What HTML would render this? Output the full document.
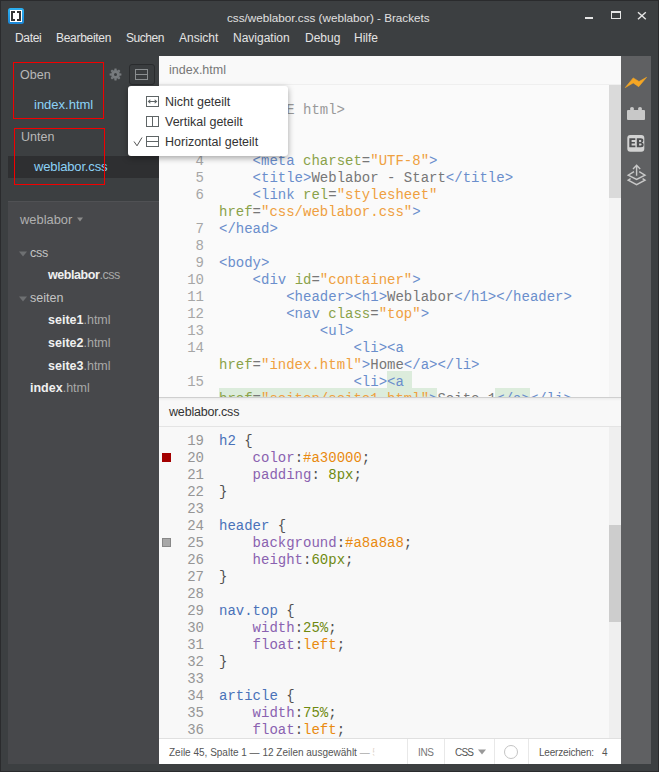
<!DOCTYPE html>
<html><head><meta charset="utf-8">
<style>
*{margin:0;padding:0;box-sizing:border-box}
html,body{width:659px;height:772px;overflow:hidden}
body{background:#3c3f41;position:relative;font-family:"Liberation Sans",sans-serif}
.a{position:absolute;white-space:pre}
.t{position:absolute;white-space:pre;line-height:1}
#bl{left:0;top:0;width:1px;height:772px;background:#2a2b2d}
#bt{left:0;top:0;width:659px;height:1px;background:#2a2b2d}
#bb{left:0;top:771px;width:659px;height:1px;background:#2a2b2d}
#br{left:658px;top:0;width:1px;height:772px;background:#2a2b2d}
.menu{font-size:12px;color:#e4e4e4;top:32px}
#proj{left:8px;top:201px;width:151px;height:563px;background:#47484b;border-top:1px solid #505154}
#sel{left:8px;top:156px;width:151px;height:22px;background:#2e2f31}
.rb{position:absolute;border:1px solid #f20000}
#editor{left:159px;top:56px;width:462px;height:708px;background:#fafafa}
#toolbar{left:621px;top:56px;width:30px;height:708px;background:#5f6062}
.hdr{position:absolute;left:0;width:462px;height:29px;background:#f9f9f9;border-bottom:1px solid #efefef}
.code{font-family:"Liberation Mono",monospace;font-size:14px;color:#777}
.ln{color:#a6a6a6;}
.tg{color:#6a8ecc}.at{color:#8aa24a}.st{color:#efa040}.pr{color:#9070b4}.nm{color:#7f9838}.mt{color:#999}.lo .tg{color:#4a72b8}.lo .pr{color:#8a62b0}.lo .st{color:#e98a10}.lo .nm{color:#6f8a10}.lo.code{color:#505050}.lo.ln{color:#959595}.hl{}
#status{left:159px;top:738px;width:462px;height:26px;background:#fff;border-top:1px solid #e0e0e0}
.sep{position:absolute;top:739px;width:1px;height:25px;background:#e8e8e8}
.st11{font-size:10px;color:#555;margin-top:1px}
#dd{left:128px;top:86px;width:160px;height:70px;background:#fff;border-radius:3px;box-shadow:0 2px 6px rgba(0,0,0,.35)}
.ddi{font-size:12.5px;color:#333;margin-top:1px}
</style></head><body>
<div class="a" id="bl"></div><div class="a" id="bt"></div><div class="a" id="br"></div><div class="a" id="bb"></div>

<!-- title bar -->
<svg class="a" style="left:8px;top:8px" width="16" height="16" viewBox="0 0 16 16">
<defs><linearGradient id="bg1" x1="0" y1="0" x2="0" y2="1"><stop offset="0" stop-color="#2cb0f0"/><stop offset="1" stop-color="#1b86d6"/></linearGradient></defs>
<rect x="0" y="0" width="16" height="16" rx="2.5" fill="url(#bg1)"/>
<rect x="2" y="2" width="12" height="12" fill="#fff"/>
<path d="M3 3h4v2H5v6h2v2H3z M13 3H9v2h2v6H9v2h4z" fill="#333"/>
</svg>
<div class="t" style="left:227px;top:12px;font-size:11.7px;color:#e0e0e0">css/weblabor.css (weblabor) - Brackets</div>
<div class="a" style="left:585px;top:17px;width:8px;height:2px;background:#e6e6e6"></div>
<div class="a" style="left:611px;top:11px;width:10px;height:8px;border:1px solid #e6e6e6;border-top-width:2px"></div>
<svg class="a" style="left:637px;top:11px" width="10" height="9" viewBox="0 0 10 9"><path d="M1 1.2L8.8 8.3M8.8 1.2L1 8.3" stroke="#e6e6e6" stroke-width="1.4"/></svg>

<div class="t menu" style="left:15px;letter-spacing:-0.32px">Datei</div>
<div class="t menu" style="left:56px;letter-spacing:-0.3px">Bearbeiten</div>
<div class="t menu" style="left:126px;letter-spacing:-0.46px">Suchen</div>
<div class="t menu" style="left:179px">Ansicht</div>
<div class="t menu" style="left:233px">Navigation</div>
<div class="t menu" style="left:305px">Debug</div>
<div class="t menu" style="left:354px">Hilfe</div>

<!-- working set -->
<div class="a" id="sel"></div>
<div class="t" style="left:20px;top:69px;font-size:12.5px;color:#b8b8b8">Oben</div>
<div class="t" style="left:34px;top:98px;font-size:13px;color:#8cd2f7">index.html</div>
<div class="t" style="left:21px;top:131px;font-size:12.5px;color:#b8b8b8">Unten</div>
<div class="t" style="left:34px;top:160px;font-size:13px;color:#8cd2f7;letter-spacing:-0.15px">weblabor.css</div>
<div class="rb" style="left:13px;top:62px;width:91px;height:57px"></div>
<div class="rb" style="left:14px;top:128px;width:91px;height:57px"></div>

<svg class="a" style="left:109px;top:68px" width="13" height="13" viewBox="-6.5 -6.5 13 13">
<g fill="#777b7e"><circle r="4.4"/><path transform="rotate(0)" d="M-1.3 -4 L-1 -5.9 H1 L1.3 -4Z"/><path transform="rotate(45)" d="M-1.3 -4 L-1 -5.9 H1 L1.3 -4Z"/><path transform="rotate(90)" d="M-1.3 -4 L-1 -5.9 H1 L1.3 -4Z"/><path transform="rotate(135)" d="M-1.3 -4 L-1 -5.9 H1 L1.3 -4Z"/><path transform="rotate(180)" d="M-1.3 -4 L-1 -5.9 H1 L1.3 -4Z"/><path transform="rotate(225)" d="M-1.3 -4 L-1 -5.9 H1 L1.3 -4Z"/><path transform="rotate(270)" d="M-1.3 -4 L-1 -5.9 H1 L1.3 -4Z"/><path transform="rotate(315)" d="M-1.3 -4 L-1 -5.9 H1 L1.3 -4Z"/></g><circle r="1.5" fill="#3c3f41"/></svg>
<div class="a" style="left:129px;top:64px;width:26px;height:21px;border:1px solid #2a2c2e;border-radius:3px;background:#3a3d3f"></div>
<div class="a" style="left:135px;top:69px;width:13px;height:11px;border:1px solid #8a8e90"></div>
<div class="a" style="left:135px;top:74px;width:13px;height:1px;background:#8a8e90"></div>
<!-- project tree -->
<div class="a" id="proj"></div>
<div class="t" style="left:20px;top:214px;font-size:12.9px;color:#b0b0b0">weblabor</div>
<svg class="a" style="left:77px;top:217px" width="6" height="5" viewBox="0 0 6 5"><path d="M0 0.5h6L3 4.5z" fill="#8c8c8c"/></svg>
<svg class="a" style="left:19px;top:251px" width="8" height="6" viewBox="0 0 8 6"><path d="M0 0.5h8L4 5.5z" fill="#6e7072"/></svg>
<div class="t" style="left:30px;top:247px;font-size:12.5px;color:#c4c4c4;letter-spacing:-0.2px">css</div>
<div class="t" style="left:48px;top:269px;font-size:12.5px;color:#f0f0f0;letter-spacing:-0.43px"><b>weblabor</b><span style="color:#a8a8a8">.css</span></div>
<svg class="a" style="left:19px;top:296px" width="8" height="6" viewBox="0 0 8 6"><path d="M0 0.5h8L4 5.5z" fill="#6e7072"/></svg>
<div class="t" style="left:30px;top:292px;font-size:12.5px;color:#c4c4c4">seiten</div>
<div class="t" style="left:48px;top:314px;font-size:12.5px;color:#f0f0f0"><b>seite1</b><span style="color:#a8a8a8">.html</span></div>
<div class="t" style="left:48px;top:337px;font-size:12.5px;color:#f0f0f0"><b>seite2</b><span style="color:#a8a8a8">.html</span></div>
<div class="t" style="left:48px;top:360px;font-size:12.5px;color:#f0f0f0"><b>seite3</b><span style="color:#a8a8a8">.html</span></div>
<div class="t" style="left:30px;top:382px;font-size:12.5px;color:#f0f0f0"><b>index</b><span style="color:#a8a8a8">.html</span></div>

<!-- editor -->
<div class="a" id="editor">
<div class="a" style="left:0;top:29px;width:462px;height:312px;overflow:hidden">
<div class="a" style="left:0;top:-29px;width:462px;height:400px">
<div class="a" style="left:228px;top:315px;width:25px;height:17px;background:#dcecdc"></div><div class="a" style="left:60px;top:332px;width:218px;height:17px;background:#dcecdc"></div><div class="a" style="left:336px;top:332px;width:35px;height:17px;background:#dcecdc"></div>
<div class="a code ln" style="left:0;top:46px;width:45px;text-align:right;line-height:17px">1
2
3
4
5
6

7
8
9
10
11
12
13
14

15
</div>
<div class="a code" style="left:60px;top:46px;line-height:17px"><span class="mt">&lt;!DOCTYPE html&gt;</span>
<span class="tg">&lt;html&gt;</span>
<span class="tg">&lt;head&gt;</span>
    <span class="tg">&lt;meta</span> <span class="at">charset</span>=<span class="st">"UTF-8"</span><span class="tg">&gt;</span>
    <span class="tg">&lt;title&gt;</span>Weblabor - Start<span class="tg">&lt;/title&gt;</span>
    <span class="tg">&lt;link</span> <span class="at">rel</span>=<span class="st">"stylesheet"</span>
<span class="at">href</span>=<span class="st">"css/weblabor.css"</span><span class="tg">&gt;</span>
<span class="tg">&lt;/head&gt;</span>

<span class="tg">&lt;body&gt;</span>
    <span class="tg">&lt;div</span> <span class="at">id</span>=<span class="st">"container"</span><span class="tg">&gt;</span>
        <span class="tg">&lt;header&gt;</span><span class="tg">&lt;h1&gt;</span>Weblabor<span class="tg">&lt;/h1&gt;</span><span class="tg">&lt;/header&gt;</span>
        <span class="tg">&lt;nav</span> <span class="at">class</span>=<span class="st">"top"</span><span class="tg">&gt;</span>
            <span class="tg">&lt;ul&gt;</span>
                <span class="tg">&lt;li&gt;</span><span class="tg">&lt;a</span>
<span class="at">href</span>=<span class="st">"index.html"</span><span class="tg">&gt;</span>Home<span class="tg">&lt;/a&gt;</span><span class="tg">&lt;/li&gt;</span>
                <span class="tg">&lt;li&gt;</span><span class="hl"><span class="tg">&lt;a</span> </span>
<span class="hl"><span class="at">href</span>=<span class="st">"seiten/seite1.html"</span><span class="tg">&gt;</span></span>Seite 1<span class="hl"><span class="tg">&lt;/a&gt;</span></span><span class="tg">&lt;/li&gt;</span></div>
</div></div>
<div class="a" style="left:450px;top:29px;width:12px;height:312px;background:#f4f4f4"></div>
<div class="a" style="left:450px;top:29px;width:12px;height:113px;background:#dadada"></div>
<div class="hdr" style="top:0"></div>
<div class="t" style="left:10px;top:8px;font-size:12.5px;color:#777">index.html</div>
<div class="a" style="left:0;top:341px;width:462px;height:1px;background:#cfcfcf"></div>
<div class="a" style="left:0;top:371px;width:462px;height:311px;overflow:hidden;background:#f8f8f8">
<div class="a" style="left:0;top:-371px;width:462px;height:700px">
<div class="a code ln lo" style="left:0;top:377px;width:45px;text-align:right;line-height:17px">19
20
21
22
23
24
25
26
27
28
29
30
31
32
33
34
35
36</div>
<div class="a code lo" style="left:60px;top:377px;line-height:17px"><span class="tg">h2</span> {
    <span class="pr">color</span>:<span class="st">#a30000</span>;
    <span class="pr">padding</span>: <span class="nm">8px</span>;
}

<span class="tg">header</span> {
    <span class="pr">background</span>:<span class="st">#a8a8a8</span>;
    <span class="pr">height</span>:<span class="nm">60px</span>;
}

<span class="tg">nav.top</span> {
    <span class="pr">width</span>:<span class="nm">25%</span>;
    <span class="pr">float</span>:<span class="st">left</span>;
}

<span class="tg">article</span> {
    <span class="pr">width</span>:<span class="nm">75%</span>;
    <span class="pr">float</span>:<span class="st">left</span>;</div>
</div></div>
<div class="a" style="left:450px;top:371px;width:12px;height:311px;background:#efefef"></div>
<div class="a" style="left:450px;top:469px;width:12px;height:97px;background:#cdcdcd"></div>
<div class="hdr" style="top:342px;border-bottom-color:#e4e4e4;background:linear-gradient(#ececec,#f8f8f8 3px)"></div>
<div class="t" style="left:10px;top:350px;font-size:12.5px;color:#333;letter-spacing:-0.17px">weblabor.css</div>
<div class="a" style="left:3px;top:397px;width:9px;height:9px;background:#a30000"></div>
<div class="a" style="left:3px;top:482px;width:9px;height:9px;background:#a8a8a8;border:1px solid #888"></div>
</div>
<div class="a" id="toolbar"></div>
<svg class="a" style="left:621px;top:56px" width="30" height="140" viewBox="621 56 30 140">
<path d="M625.3 87.6 L633.2 77.9 L639 81.5 L646.6 77.3 L638.7 86.7 L633.2 82.9 Z" fill="#f5a623" stroke="#f5a623" stroke-width="0.6" stroke-linejoin="round"/>
<rect x="627" y="110" width="18" height="10" rx="1" fill="#c8c8c8"/>
<rect x="630" y="107" width="4" height="4" rx="2" fill="#c8c8c8"/>
<rect x="638" y="107" width="4" height="4" rx="2" fill="#c8c8c8"/>
<rect x="627.3" y="135" width="17" height="16.7" rx="3" fill="#d2d2d2"/>
<path fill="#4e4f51" fill-rule="evenodd" d="M629.3 138.3h6v1.8h-3.7v1.8h3.3v1.7h-3.3v1.9h3.8v1.8h-6.1z M636.8 138.3h3.9q2.6 0 2.6 2.3q0 1.5-1.3 2q1.7 0.4 1.7 2.2q0 2.5-2.8 2.5h-4.1z M639.1 140v1.9h1.3q0.9 0 0.9-1q0-0.9-0.9-0.9z M639.1 143.5v2.1h1.5q1 0 1-1.05q0-1.05-1-1.05z"/>
<g fill="none" stroke="#c8c8c8" stroke-width="1.4">
<path d="M636.6 165.5 V175.7 M633 169 L636.6 165.3 L640.2 169"/>
<path d="M634 171.6 L628.2 175.2 L636.6 179.4 L645 175.2 L639.2 171.6"/>
<path d="M630.6 178.6 L628.2 180.1 L636.6 184.6 L645 180.1 L642.6 178.6"/>
</g>
</svg>

<div class="a" id="status"></div>
<div class="t st11" style="left:169px;top:747px">Zeile 45, Spalte 1 — 12 Zeilen ausgewählt <span style="color:#aaa">— 5</span></div>
<div class="a" style="left:372px;top:740px;width:35px;height:23px;background:linear-gradient(90deg,rgba(255,255,255,0),#fff 3px)"></div>
<div class="sep" style="left:407px"></div>
<div class="t st11" style="left:418px;top:747px;color:#777;letter-spacing:-0.4px">INS</div>
<div class="sep" style="left:444px"></div>
<div class="t st11" style="left:455px;top:747px;letter-spacing:-0.8px">CSS</div>
<svg class="a" style="left:478px;top:749px" width="8" height="6" viewBox="0 0 8 6"><path d="M0 0.5h8L4 5.5z" fill="#999"/></svg>
<div class="sep" style="left:494px"></div>
<div class="a" style="left:504px;top:745px;width:14px;height:14px;border:1px solid #c4c4c4;border-radius:50%"></div>
<div class="sep" style="left:528px"></div>
<div class="t st11" style="left:539px;top:747px;letter-spacing:-0.2px">Leerzeichen:</div><div class="t st11" style="left:602px;top:747px">4</div>

<div class="a" id="dd"></div>
<svg class="a" style="left:128px;top:86px" width="40" height="70" viewBox="128 86 40 70">
<g fill="none" stroke="#5f6566" stroke-width="1">
<rect x="146.5" y="96.5" width="12" height="10"/>
<rect x="146.5" y="116.5" width="12" height="10"/>
<path d="M152.5 116.5 V126.5"/>
<rect x="146.5" y="136.5" width="12" height="10"/>
<path d="M146.5 141.5 H158.5"/>
<path d="M148.5 101.5 H156.5"/>
</g>
<path d="M147.6 101.5 L150.3 99.2 V103.8 Z M157.4 101.5 L154.7 99.2 V103.8 Z" fill="#5f6566"/>
<path d="M134 141.5 L137 145.8 L142 137.5" fill="none" stroke="#555" stroke-width="1"/>
</svg>
<div class="t ddi" style="left:165px;top:95px">Nicht geteilt</div>
<div class="t ddi" style="left:165px;top:115px">Vertikal geteilt</div>
<div class="t ddi" style="left:165px;top:135px">Horizontal geteilt</div>
</body></html>
